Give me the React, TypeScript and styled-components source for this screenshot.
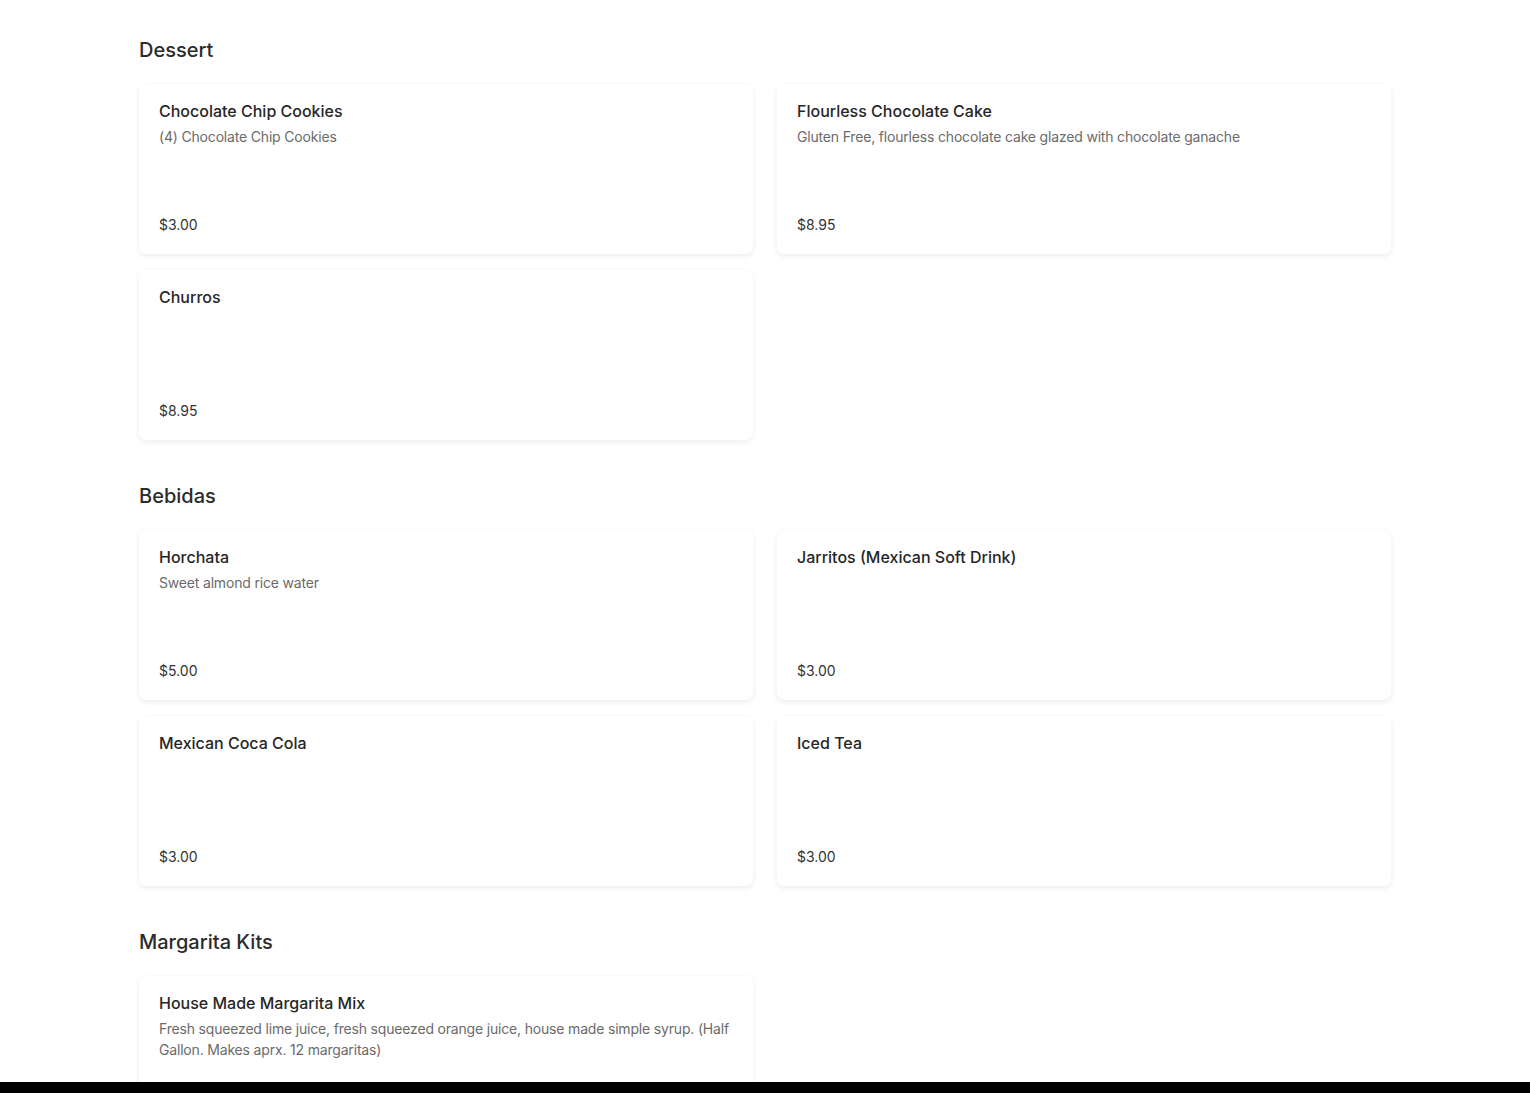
import styled, { createGlobalStyle } from "styled-components";

type Item = { name: string; description?: string; price: string };
type Section = { title: string; items: Item[] };

const sections: Section[] = [
	{
		title: "Dessert",
		items: [
			{ name: "Chocolate Chip Cookies", description: "(4) Chocolate Chip Cookies", price: "$3.00" },
			{
				name: "Flourless Chocolate Cake",
				description: "Gluten Free, flourless chocolate cake glazed with chocolate ganache",
				price: "$8.95",
			},
			{ name: "Churros", price: "$8.95" },
		],
	},
	{
		title: "Bebidas",
		items: [
			{ name: "Horchata", description: "Sweet almond rice water", price: "$5.00" },
			{ name: "Jarritos (Mexican Soft Drink)", price: "$3.00" },
			{ name: "Mexican Coca Cola", price: "$3.00" },
			{ name: "Iced Tea", price: "$3.00" },
		],
	},
	{
		title: "Margarita Kits",
		items: [
			{
				name: "House Made Margarita Mix",
				description:
					"Fresh squeezed lime juice, fresh squeezed orange juice, house made simple syrup. (Half Gallon. Makes aprx. 12 margaritas)",
				price: "$25.00",
			},
		],
	},
];

const App = () => {
	return (
		<>
			<GlobalStyle />
			<Page>
				{/* tail of the section above, scrolled mostly out of view */}
				<CardGrid>
					<Card aria-hidden />
					<Card aria-hidden />
				</CardGrid>
				{sections.map((section) => (
					<MenuSection key={section.title}>
						<SectionTitle>{section.title}</SectionTitle>
						<CardGrid>
							{section.items.map((item) => (
								<Card key={item.name}>
									<ItemName>{item.name}</ItemName>
									{item.description && <ItemDescription>{item.description}</ItemDescription>}
									<Price>{item.price}</Price>
								</Card>
							))}
						</CardGrid>
					</MenuSection>
				))}
			</Page>
			<BottomBar />
		</>
	);
};

const GlobalStyle = createGlobalStyle`
	html, body {
		margin: 0;
		overflow: hidden;
		background: #ffffff;
	}
	body {
		font-family: Inter, "Noto Sans", "Liberation Sans", sans-serif;
		color: #2a2a2a;
		-webkit-font-smoothing: antialiased;
	}
`;

const Page = styled.main`
	max-width: 1252px;
	margin: -176px auto 0;
`;

const MenuSection = styled.section`
	padding-top: 42px;
`;

const SectionTitle = styled.h2`
	margin: 0 0 20px;
	font-size: 20px;
	line-height: 28px;
	font-weight: 500;
	color: #2b2b2b;
`;

const CardGrid = styled.div`
	display: grid;
	grid-template-columns: 1fr 1fr;
	column-gap: 24px;
	row-gap: 16px;
`;

const Card = styled.article`
	display: flex;
	flex-direction: column;
	min-height: 170px;
	box-sizing: border-box;
	padding: 16px 20px 19px;
	background: #ffffff;
	border-radius: 8px;
	box-shadow: 0 2px 6px rgba(0, 0, 0, 0.08);
`;

const ItemName = styled.h3`
	margin: 0;
	font-size: 16px;
	line-height: 22px;
	font-weight: 500;
	color: #262626;
`;

const ItemDescription = styled.p`
	margin: 4px 0 0;
	font-size: 14px;
	line-height: 21px;
	letter-spacing: -0.18px;
	color: #6b6b6b;
`;

const Price = styled.span`
	margin-top: auto;
	padding-top: 12px;
	font-size: 14px;
	line-height: 20px;
	color: #333333;
`;

const BottomBar = styled.div`
	position: fixed;
	left: 0;
	right: 0;
	bottom: 0;
	height: 11px;
	background: #000000;
`;

export default App;
